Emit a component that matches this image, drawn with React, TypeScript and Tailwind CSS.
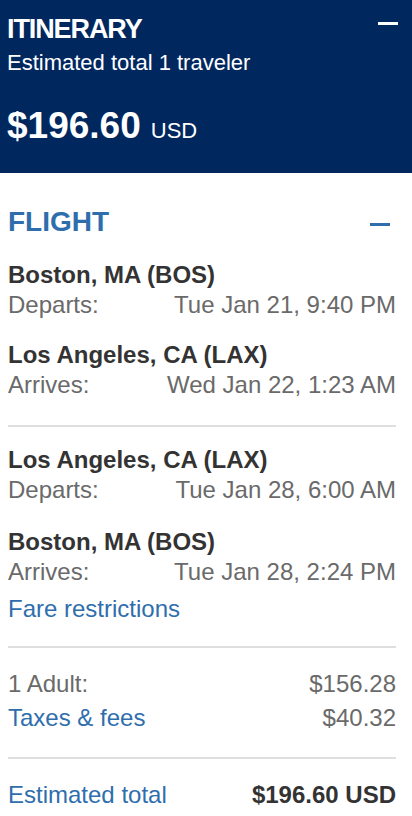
export default function App() {
  return (
    <div className="w-[412px] min-h-[816px] bg-white font-['Liberation_Sans',Arial,sans-serif] overflow-hidden">
      {/* header */}
      <div className="bg-[#00285f] text-white pl-[7px] pr-[14px] pt-[13px] pb-[25px]">
        <div className="flex justify-between items-start">
          <h1 className="text-[27px] leading-[32px] font-bold tracking-[-1.1px]">ITINERARY</h1>
          <span className="mt-[9px] h-[3px] w-[20px] bg-white" />
        </div>
        <p className="mt-[2px] text-[22px] leading-[32px]">Estimated total 1 traveler</p>
        <p className="mt-[25px] text-[37px] leading-[44px] font-bold">
          $196.60
          <span className="text-[22px] leading-none font-normal ml-[10px]">USD</span>
        </p>
      </div>

      <div className="pl-[8px] pr-[16px] pt-[31px] text-[24px] leading-[30px]">
        <div className="flex justify-between items-start">
          <h2 className="text-[28px] leading-[36px] font-bold text-[#2f6ead]">FLIGHT</h2>
          <span className="mt-[19px] mr-[6px] h-[3px] w-[20px] bg-[#2f6ead]" />
        </div>

        <div className="mt-[20px]">
          <Stop city="Boston, MA (BOS)" label="Departs:" time="Tue Jan 21, 9:40 PM" />
          <div className="mt-[20px]">
            <Stop city="Los Angeles, CA (LAX)" label="Arrives:" time="Wed Jan 22, 1:23 AM" />
          </div>
        </div>

        <div className="mt-[25px] h-[2px] bg-[#dedede]" />

        <div className="mt-[18px]">
          <Stop city="Los Angeles, CA (LAX)" label="Departs:" time="Tue Jan 28, 6:00 AM" />
          <div className="mt-[22px]">
            <Stop city="Boston, MA (BOS)" label="Arrives:" time="Tue Jan 28, 2:24 PM" />
          </div>
          <a className="block mt-[7px] text-[#2f6ead]">Fare restrictions</a>
        </div>

        <div className="mt-[22px] h-[2px] bg-[#dedede]" />

        <div className="mt-[21px] text-[#6a6a6a]">
          <div className="flex justify-between">
            <span>1 Adult:</span>
            <span>$156.28</span>
          </div>
          <div className="flex justify-between mt-[4px]">
            <a className="text-[#2f6ead]">Taxes &amp; fees</a>
            <span>$40.32</span>
          </div>
        </div>

        <div className="mt-[24px] h-[2px] bg-[#dedede]" />

        <div className="mt-[21px] flex justify-between">
          <a className="text-[#2f6ead]">Estimated total</a>
          <span className="font-bold text-[#333333]">$196.60 USD</span>
        </div>
      </div>
    </div>
  )
}

function Stop({ city, label, time }: { city: string; label: string; time: string }) {
  return (
    <div>
      <p className="font-bold text-[#333333]">{city}</p>
      <div className="flex justify-between text-[#6a6a6a]">
        <span>{label}</span>
        <span>{time}</span>
      </div>
    </div>
  )
}
